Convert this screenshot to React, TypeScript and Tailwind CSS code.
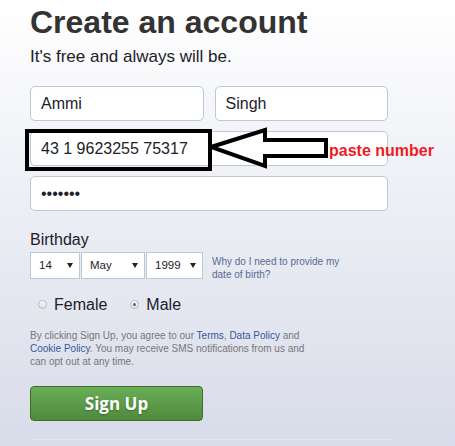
import React from "react";

function Field({ value, className = "" }: { value: string; className?: string }) {
  return (
    <div
      className={`h-[35px] flex items-center px-[10px] bg-white border border-[#bdc7d8] rounded-[5px] text-[16px] text-[#1d2129] ${className}`}
    >
      {value}
    </div>
  );
}

function Select({ value, width }: { value: string; width: string }) {
  return (
    <div
      className={`${width} h-[27px] flex items-center justify-between pl-[8px] pr-[6px] bg-white border border-[#bdc7d8] text-[11.5px] text-[#1d2129]`}
    >
      <span>{value}</span>
      <svg width="6" height="5" viewBox="0 0 6 5">
        <polygon points="0,0 6,0 3,5" fill="#222" />
      </svg>
    </div>
  );
}

function Radio({ checked, label }: { checked?: boolean; label: string }) {
  return (
    <label className="flex items-center gap-[7px]">
      <span className="w-[9px] h-[9px] rounded-full border border-[#bcbcbc] bg-gradient-to-b from-[#f6f6f6] to-[#e4e4e4] flex items-center justify-center">
        {checked && <span className="w-[3px] h-[3px] rounded-full bg-[#666]" />}
      </span>
      <span className="text-[16px] leading-[19px] text-[#1d2129]">{label}</span>
    </label>
  );
}

export default function App() {
  return (
    <div className="min-h-screen bg-gradient-to-b from-white to-[#d8dbe9] font-['Liberation_Sans',Arial,sans-serif] overflow-hidden">
      <div className="pl-[30px] pt-[3px] w-[388px]">
        <h1 className="text-[32px] leading-[38px] font-bold text-[#333]">Create an account</h1>
        <p className="mt-[6px] text-[17px] leading-[20px] text-[#1d2129]">It's free and always will be.</p>

        <div className="mt-[19px] flex flex-col gap-[10px] w-[358px]">
          <div className="flex gap-[11px]">
            <Field value="Ammi" className="flex-1" />
            <Field value="Singh" className="flex-1" />
          </div>

          <div className="relative">
            <Field value="43 1 9623255 75317" />
            {/* annotation drawn over the mobile field */}
            <div className="absolute left-[-5px] top-[-2px] w-[187px] h-[42px] border-[4px] border-black" />
            <svg
              className="absolute left-[178px] top-[-4px]"
              width="122"
              height="42"
              viewBox="0 0 122 42"
            >
              <polygon
                points="3,20 57,3 57,13 118,13 118,29 57,29 57,39"
                fill="none"
                stroke="#000"
                strokeWidth="4"
                strokeLinejoin="miter"
              />
            </svg>
            <span className="absolute left-[299px] top-[11px] whitespace-nowrap text-[16px] leading-[18px] font-bold text-[#ee1c25]">
              paste number
            </span>
          </div>

          <Field value="•••••••" />
        </div>

        <div className="mt-[19px] text-[16px] leading-[19px] text-[#1d2129]">Birthday</div>
        <div className="mt-[3px] flex items-start">
          <div className="flex gap-[1px]">
            <Select value="14" width="w-[50px]" />
            <Select value="May" width="w-[64px]" />
            <Select value="1999" width="w-[57px]" />
          </div>
          <p className="ml-[9px] mt-[3px] w-[140px] text-[10px] leading-[13px] text-[#576b95]">
            Why do I need to provide my date of birth?
          </p>
        </div>

        <div className="mt-[14px] flex items-center gap-[23px] pl-[8px]">
          <Radio label="Female" />
          <Radio label="Male" checked />
        </div>

        <p className="mt-[15px] w-[280px] text-[10px] leading-[13px] text-[#777]">
          By clicking Sign Up, you agree to our <span className="text-[#365899]">Terms</span>,{" "}
          <span className="text-[#365899]">Data Policy</span> and{" "}
          <span className="text-[#365899]">Cookie Policy</span>. You may receive SMS notifications from us and
          can opt out at any time.
        </p>

        <button className="mt-[18px] w-[173px] h-[35px] rounded-[4px] border border-[#3b6e22] bg-gradient-to-b from-[#69ae57] to-[#4f8a3d] text-white text-[17px] font-bold font-['Open_Sans',sans-serif] [text-shadow:0_1px_2px_rgba(0,0,0,0.3)]">
          Sign Up
        </button>

        <div className="mt-[18px] w-[360px] border-t border-[#e4e6ef]" />
      </div>
    </div>
  );
}
